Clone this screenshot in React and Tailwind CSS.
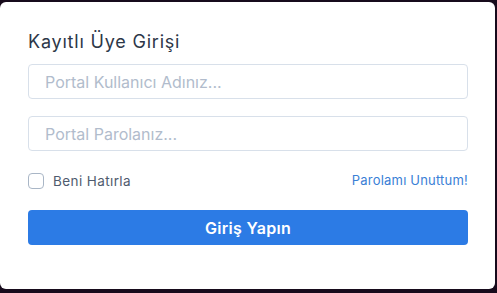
import React, { useState } from 'react';

export default function App() {
  const [remember, setRemember] = useState(false);

  return (
    <div className="w-[497px] h-[293px] bg-[#170b1c] pt-[2px] overflow-hidden" style={{ fontFamily: 'Inter, "Noto Sans", sans-serif' }}>
      <div className="w-[495px] h-[287px] bg-white rounded-md px-[28px] pt-[28px]">
        <h2 className="text-[18px] leading-[24px] text-[#2d3748] font-normal tracking-[0.8px]">Kayıtlı Üye Girişi</h2>

        <div className="mt-[10px] flex flex-col gap-[17px] w-[440px]">
          <input
            type="text"
            placeholder="Portal Kullanıcı Adınız..."
            className="h-[35px] w-full border border-[#d8e0ea] rounded-[4px] px-[16px] text-[16px] text-[#4a5568] placeholder:text-[#b1bccc] outline-none"
          />
          <input
            type="password"
            placeholder="Portal Parolanız..."
            className="h-[35px] w-full border border-[#d8e0ea] rounded-[4px] px-[16px] text-[16px] text-[#4a5568] placeholder:text-[#b1bccc] outline-none"
          />
        </div>

        <div className="mt-[20px] w-[440px] flex items-center justify-between">
          <label className="flex items-center gap-[9px] cursor-pointer">
            <input
              type="checkbox"
              checked={remember}
              onChange={(e) => setRemember(e.target.checked)}
              className="appearance-none w-[16px] h-[16px] border border-[#a9b6c6] rounded-[4px] bg-white"
            />
            <span className="text-[13.5px] tracking-[0.4px] text-[#4f5b6e]">Beni Hatırla</span>
          </label>
          <a href="#" className="text-[13px] tracking-[0.2px] text-[#3a80d6]">Parolamı Unuttum!</a>
        </div>

        <button className="mt-[19px] w-[440px] h-[35px] bg-[#2c7be5] rounded-[4px] text-white text-[16px] tracking-[0.3px] font-semibold">
          Giriş Yapın
        </button>
      </div>
    </div>
  );
}
